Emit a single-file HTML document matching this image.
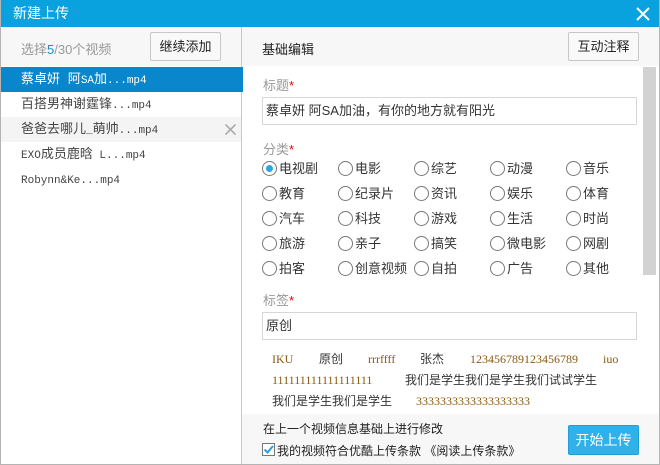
<!DOCTYPE html>
<html><head><meta charset="utf-8"><style>
*{margin:0;padding:0;box-sizing:border-box}
body{width:660px;height:465px;overflow:hidden;background:#fff;font-family:"Liberation Sans","Noto Sans CJK SC",sans-serif;font-size:13px;color:#333;position:relative}
.a{position:absolute}
.frame{left:0;top:0;width:660px;height:465px;border:1px solid #b4b4b4;border-top:none}
.title{left:0;top:0;width:660px;height:27px;background:#0aa2de;color:#fff;font-size:14px;line-height:27px;padding-left:13px}
.btn{border:1px solid #c8c8c8;border-radius:2px;background:#f9f9f9;font-size:13px;color:#222;text-align:center}
.row{left:1px;width:240px;height:25px;line-height:25px;padding-left:20px;font-size:13px;font-family:"Liberation Mono","Noto Sans CJK SC",monospace;color:#444}
.row s{text-decoration:none;font-size:11px}
.lbl{left:263px;color:#999;font-size:13px}
.lbl b{color:#e00;font-weight:normal}
.inp{left:262px;width:375px;height:28px;border:1px solid #d7d7d7;line-height:26px;padding-left:3px;font-size:13px;color:#333}
.r{font-size:13px;color:#333;line-height:16px}
.r i{display:inline-block;width:15px;height:15px;border:1px solid #777;border-radius:50%;vertical-align:-3px;margin-right:2px;position:relative;background:#fff}
.r i.on:after{content:"";position:absolute;left:3px;top:3px;width:7px;height:7px;border-radius:50%;background:#2ba6e4}
.tag{font-family:"Liberation Serif","Noto Sans CJK SC",serif;font-size:12px;line-height:16px;color:#333}
.tag.o{color:#8a5a10}
</style></head><body>
<div class="a title">新建上传</div>
<svg class="a" style="left:636px;top:7px" width="14" height="14"><path d="M1 1L13 13M13 1L1 13" stroke="#fff" stroke-width="2"/></svg>
<div class="a" style="left:1px;top:27px;width:240px;height:39px;background:#f7f7f7"></div>
<div class="a" style="left:21px;top:39px;color:#999;font-size:13px">选择<span style="color:#1a8fd0">5</span>/30个视频</div>
<div class="a btn" style="left:150px;top:32px;width:71px;height:29px;line-height:27px">继续添加</div>
<div class="a" style="left:241px;top:27px;width:1px;height:438px;background:#c8c8c8"></div>
<div class="a" style="left:242px;top:27px;width:417px;height:39px;background:#f7f7f7"></div>
<div class="a" style="left:262px;top:39px;color:#222">基础编辑</div>
<div class="a btn" style="left:568px;top:32px;width:71px;height:29px;line-height:27px">互动注释</div>
<div class="a" style="left:241px;top:67px;width:2px;height:25px;background:#0a86cc"></div>

<div class="a row" style="top:67px;background:#0a86cc;color:#fff">蔡卓妍 阿<s>SA</s>加<s>...mp4</s></div>
<div class="a row" style="top:92px">百搭男神谢霆锋<s>...mp4</s></div>
<div class="a row" style="top:117px;background:#f4f4f4">爸爸去哪儿<s>_</s>萌帅<s>...mp4</s></div>
<svg class="a" style="left:225px;top:124px" width="11" height="11"><path d="M0.5 0.5L10.5 10.5M10.5 0.5L0.5 10.5" stroke="#aaa" stroke-width="1.6"/></svg>
<div class="a row" style="top:142px"><s>EXO</s>成员鹿晗<s> L...mp4</s></div>
<div class="a row" style="top:167px"><s>Robynn&amp;Ke...mp4</s></div>

<div class="a" style="left:643px;top:67px;width:13px;height:208px;background:#d2d2d2"></div>

<div class="a lbl" style="top:75px">标题<b>*</b></div>
<div class="a inp" style="top:97px">蔡卓妍 阿SA加油，有你的地方就有阳光</div>
<div class="a lbl" style="top:139px">分类<b>*</b></div>

<div class="a r" style="left:262px;top:161px"><i class="on"></i>电视剧</div>
<div class="a r" style="left:338px;top:161px"><i></i>电影</div>
<div class="a r" style="left:414px;top:161px"><i></i>综艺</div>
<div class="a r" style="left:490px;top:161px"><i></i>动漫</div>
<div class="a r" style="left:566px;top:161px"><i></i>音乐</div>
<div class="a r" style="left:262px;top:186px"><i></i>教育</div>
<div class="a r" style="left:338px;top:186px"><i></i>纪录片</div>
<div class="a r" style="left:414px;top:186px"><i></i>资讯</div>
<div class="a r" style="left:490px;top:186px"><i></i>娱乐</div>
<div class="a r" style="left:566px;top:186px"><i></i>体育</div>
<div class="a r" style="left:262px;top:211px"><i></i>汽车</div>
<div class="a r" style="left:338px;top:211px"><i></i>科技</div>
<div class="a r" style="left:414px;top:211px"><i></i>游戏</div>
<div class="a r" style="left:490px;top:211px"><i></i>生活</div>
<div class="a r" style="left:566px;top:211px"><i></i>时尚</div>
<div class="a r" style="left:262px;top:236px"><i></i>旅游</div>
<div class="a r" style="left:338px;top:236px"><i></i>亲子</div>
<div class="a r" style="left:414px;top:236px"><i></i>搞笑</div>
<div class="a r" style="left:490px;top:236px"><i></i>微电影</div>
<div class="a r" style="left:566px;top:236px"><i></i>网剧</div>
<div class="a r" style="left:262px;top:261px"><i></i>拍客</div>
<div class="a r" style="left:338px;top:261px"><i></i>创意视频</div>
<div class="a r" style="left:414px;top:261px"><i></i>自拍</div>
<div class="a r" style="left:490px;top:261px"><i></i>广告</div>
<div class="a r" style="left:566px;top:261px"><i></i>其他</div>

<div class="a lbl" style="top:290px">标签<b>*</b></div>
<div class="a inp" style="top:312px">原创</div>

<div class="a tag o" style="left:272px;top:351px">IKU</div>
<div class="a tag" style="left:319px;top:351px">原创</div>
<div class="a tag o" style="left:368px;top:351px">rrrffff</div>
<div class="a tag" style="left:420px;top:351px">张杰</div>
<div class="a tag o" style="left:470px;top:351px">123456789123456789</div>
<div class="a tag o" style="left:603px;top:351px">iuo</div>
<div class="a tag o" style="left:272px;top:372px">111111111111111111</div>
<div class="a tag" style="left:405px;top:372px">我们是学生我们是学生我们试试学生</div>
<div class="a tag" style="left:272px;top:393px">我们是学生我们是学生</div>
<div class="a tag o" style="left:416px;top:393px">3333333333333333333</div>

<div class="a" style="left:242px;top:414px;width:417px;height:50px;background:#f7f7f7"></div>
<div class="a" style="left:263px;top:420px;font-size:12px;color:#222">在上一个视频信息基础上进行修改</div>
<svg class="a" style="left:262px;top:443px" width="13" height="13"><rect x="0.5" y="0.5" width="12" height="12" fill="#fff" stroke="#777"/><path d="M2.5 6.5L5.5 9.5L11 3" stroke="#2a9fdd" stroke-width="2" fill="none"/></svg>
<div class="a" style="left:277px;top:442px;font-size:12px;color:#222">我的视频符合优酷上传条款 《阅读上传条款》</div>
<div class="a" style="left:568px;top:425px;width:71px;height:30px;background:#31b1ea;border:1px solid #1e9fd8;border-radius:2px;color:#fff;font-size:14px;text-align:center;line-height:28px">开始上传</div>
<div class="a frame"></div>
</body></html>
